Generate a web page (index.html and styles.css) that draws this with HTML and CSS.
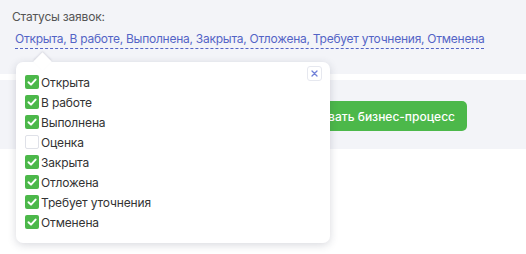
FILE: index.html
```html
<!DOCTYPE html>
<html lang="ru">
<head>
<meta charset="utf-8">
<link rel="stylesheet" href="styles.css">
</head>
<body>
<div class="page">
  <section class="filter">
    <div class="label">Статусы заявок:</div>
    <div class="value"><span class="link">Открыта, В работе, Выполнена, Закрыта, Отложена, Требует уточнения, Отменена</span></div>
  </section>
  <div class="gap"></div>
  <section class="actions">
    <button class="btn">Активировать бизнес-процесс</button>
  </section>
</div>

<div class="popup">
  <div class="arrow"></div>
  <button class="close" aria-label="Закрыть">
    <svg width="7" height="7" viewBox="0 0 7 7"><path d="M1 1L6 6M6 1L1 6" stroke="#7080d8" stroke-width="1.3" stroke-linecap="round"/></svg>
  </button>
  <ul class="list">
    <li class="item"><span class="cb on"></span>Открыта</li>
    <li class="item"><span class="cb on"></span>В работе</li>
    <li class="item"><span class="cb on"></span>Выполнена</li>
    <li class="item"><span class="cb"></span>Оценка</li>
    <li class="item"><span class="cb on"></span>Закрыта</li>
    <li class="item"><span class="cb on"></span>Отложена</li>
    <li class="item"><span class="cb on"></span>Требует уточнения</li>
    <li class="item"><span class="cb on"></span>Отменена</li>
  </ul>
</div>
</body>
</html>
```
FILE: styles.css
```css
* { box-sizing: border-box; }
html, body { margin: 0; padding: 0; background: #fff; }
body {
  font-family: Inter, Roboto, "Liberation Sans", sans-serif;
  font-size: 12px;
  color: #333;
  width: 526px;
  height: 254px;
  overflow: hidden;
  position: relative;
}
.page { display: flex; flex-direction: column; }
.filter {
  background: #f3f4f8;
  height: 74px;
  padding: 9px 12px 0 12px;
}
.label { color: #555; font-size: 12px; line-height: 16px; letter-spacing: -0.2px; }
.value { margin-top: 6px; padding-left: 3px; line-height: 16px; }
.link {
  color: #5364c6;
  font-size: 12px;
  letter-spacing: -0.25px;
  border-bottom: 1px dashed #5364c6;
  padding-bottom: 2px;
}
.gap { height: 6px; background: #fff; }
.actions {
  background: #f3f4f8;
  height: 69px;
  display: flex;
  justify-content: flex-end;
  align-items: flex-start;
  padding: 21px 59px 0 0;
}
.btn {
  background: #4cb84a;
  color: #fff;
  border: 0;
  border-radius: 5px;
  height: 30px;
  padding: 0 12px 0 20px;
  font-family: inherit;
  font-size: 12px;
  letter-spacing: 0;
  font-weight: 500;
}
.popup {
  position: absolute;
  left: 16px;
  top: 62px;
  width: 314px;
  height: 181px;
  background: #fff;
  border-radius: 7px;
  box-shadow: 0 2px 8px rgba(40, 45, 70, 0.18);
  padding: 10px 0 0 9px;
}
.arrow {
  position: absolute;
  left: 20px;
  top: -7px;
  width: 13px;
  height: 13px;
  background: #fff;
  transform: rotate(45deg);
  box-shadow: -1px -1px 2px rgba(40, 45, 70, 0.12);
}
.close {
  position: absolute;
  right: 8px;
  top: 4px;
  width: 15px;
  height: 15px;
  padding: 0;
  border: 1px solid #e6e8ef;
  border-radius: 3px;
  background: #fff;
  display: flex;
  align-items: center;
  justify-content: center;
}
.list { list-style: none; margin: 0; padding: 0; position: relative; }
.item {
  display: flex;
  align-items: center;
  height: 20px;
  font-size: 12px;
  letter-spacing: -0.15px;
  color: #333;
}
.cb {
  width: 14px;
  height: 14px;
  border-radius: 2px;
  border: 1px solid #dfe1e8;
  background: #fff;
  margin-right: 2px;
  flex: none;
}
.cb.on {
  border: 0;
  background: #4cb84a url("data:image/svg+xml;utf8,<svg xmlns='http://www.w3.org/2000/svg' width='14' height='14'><path d='M3.5 7.2L6 9.6L10.6 4.6' fill='none' stroke='white' stroke-width='2' stroke-linecap='round' stroke-linejoin='round'/></svg>") no-repeat center;
}
```
